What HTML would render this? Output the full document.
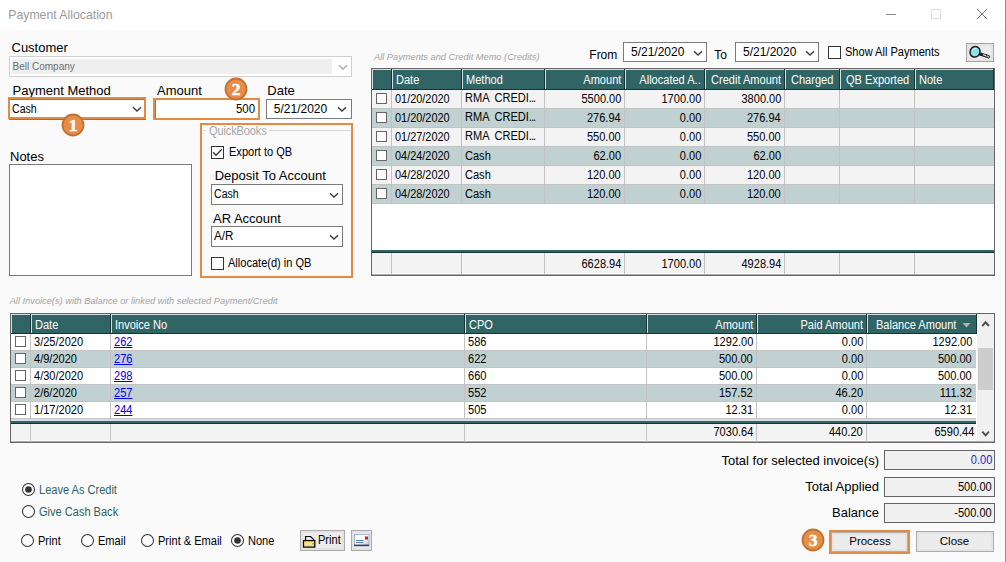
<!DOCTYPE html><html><head><meta charset="utf-8"><style>
html,body{margin:0;padding:0;width:1006px;height:562px;overflow:hidden;background:#fafafa;}
body{position:relative;font-family:"Liberation Sans",sans-serif;}
.t{position:absolute;white-space:nowrap;line-height:1;}
.b{position:absolute;box-sizing:border-box;}
u{text-decoration:underline;}
</style></head><body>
<div class="b" style="left:0px;top:0px;width:1006px;height:30px;background:#fff"></div>
<div class="t" style="left:8.3px;top:8.63px;font-size:12.25px;color:#9a9a9a;">Payment Allocation</div>
<div class="b" style="left:886px;top:14px;width:10px;height:1px;background:#8a8a8a"></div>
<div class="b" style="left:931px;top:9px;width:10px;height:10px;border:1px solid #dcdcdc"></div>
<svg class="b" style="left:976px;top:8px" width="12" height="12"><path d="M1 1 L11 11 M11 1 L1 11" stroke="#6a6a6a" stroke-width="0.95"/></svg>
<div class="b" style="left:1005px;top:0px;width:1px;height:562px;background:#8f8f8f"></div>
<div class="t" style="left:11.5px;top:41.00px;font-size:13px;color:#000;">Customer</div>
<div class="b" style="left:9px;top:56px;width:343px;height:21px;border:1px solid #d0d0d0;background:#fff"></div>
<div class="b" style="left:12px;top:59px;width:320px;height:15px;background:#efefef"></div>
<div class="t" style="left:12.5px;top:61.53px;font-size:10px;color:#6d6d6d;">Bell Company</div>
<svg class="b" style="left:338px;top:63.5px" width="10" height="6"><path d="M1 1.2 L5 5 L9 1.2" fill="none" stroke="#a8a8a8" stroke-width="1.35"/></svg>
<div class="t" style="left:12.5px;top:83.50px;font-size:13px;color:#000;">Payment Method</div>
<div class="b" style="left:9px;top:99px;width:137px;height:21px;border:1px solid #7a7a7a;background:#fff"></div>
<div class="b" style="left:8px;top:97px;width:138px;height:22px;border:2px solid #e48a43"></div>
<div class="t" style="left:11.8px;top:102.84px;font-size:12px;color:#000;transform:scaleX(0.88);transform-origin:0 0;">Cash</div>
<svg class="b" style="left:132px;top:106px" width="10" height="6"><path d="M1 1.2 L5 5 L9 1.2" fill="none" stroke="#3a3a3a" stroke-width="1.35"/></svg>
<svg class="b" style="left:60.5px;top:112.5px" width="24" height="24"><circle cx="12" cy="12" r="10.5" fill="#e68d47" stroke="#c27133" stroke-width="1.8"/><text x="12" y="18.2" text-anchor="middle" font-family="Liberation Serif" font-weight="bold" font-size="17.5" fill="#fff" stroke="#fff" stroke-width="0.5">1</text></svg>
<div class="t" style="left:157px;top:83.70px;font-size:13px;color:#000;">Amount</div>
<div class="b" style="left:153px;top:98px;width:107px;height:22px;background:#fff"></div>
<div class="b" style="left:155px;top:100px;width:1px;height:18px;background:#7a7a7a"></div>
<div class="b" style="left:153px;top:98px;width:107px;height:22px;border:2px solid #e48a43"></div>
<div class="t" style="right:750.5px;top:102.64px;font-size:12px;color:#000;transform:scaleX(0.95);transform-origin:100% 0;">500</div>
<svg class="b" style="left:223.5px;top:76.5px" width="24" height="24"><circle cx="12" cy="12" r="10.5" fill="#e68d47" stroke="#c27133" stroke-width="1.8"/><text x="12" y="18.2" text-anchor="middle" font-family="Liberation Serif" font-weight="bold" font-size="17.5" fill="#fff" stroke="#fff" stroke-width="0.5">2</text></svg>
<div class="t" style="left:267.3px;top:83.70px;font-size:13px;color:#000;">Date</div>
<div class="b" style="left:266px;top:99px;width:86px;height:20px;border:1px solid #7a7a7a;background:#fff"></div>
<div class="t" style="left:273.8px;top:102.64px;font-size:12px;color:#000;">5/21/2020</div>
<svg class="b" style="left:337px;top:106px" width="10" height="6"><path d="M1 1.2 L5 5 L9 1.2" fill="none" stroke="#3a3a3a" stroke-width="1.35"/></svg>
<div class="t" style="left:10px;top:149.80px;font-size:13px;color:#000;">Notes</div>
<div class="b" style="left:9px;top:164px;width:183px;height:112px;border:1px solid #7a7a7a;background:#fff"></div>
<div class="b" style="left:200px;top:123px;width:153px;height:155px;border:2px solid #e48a43"></div>
<div class="b" style="left:203px;top:130px;width:148px;height:1px;background:#dadada"></div>
<div class="b" style="left:206px;top:125px;width:63px;height:11px;background:#fafafa"></div>
<div class="t" style="left:209px;top:124.54px;font-size:12px;color:#a6a6a6;transform:scaleX(0.92);transform-origin:0 0;letter-spacing:-0.15px">QuickBooks</div>
<div class="b" style="left:211px;top:146px;width:13px;height:13px;border:1px solid #333;background:#fff;box-sizing:border-box"></div>
<svg class="b" style="left:211px;top:146px" width="13" height="13"><path d="M2.2 6.3 L5 9.2 L10.8 3.2" fill="none" stroke="#333" stroke-width="1.3"/></svg>
<div class="t" style="left:228.6px;top:145.84px;font-size:12px;color:#000;transform:scaleX(0.92);transform-origin:0 0;">Export to QB</div>
<div class="t" style="left:214.7px;top:169.00px;font-size:13px;color:#000;">Deposit To Account</div>
<div class="b" style="left:211px;top:184px;width:132px;height:21px;border:1px solid #7a7a7a;background:#fff"></div>
<div class="t" style="left:213.5px;top:187.84px;font-size:12px;color:#000;transform:scaleX(0.88);transform-origin:0 0;">Cash</div>
<svg class="b" style="left:329px;top:192px" width="10" height="6"><path d="M1 1.2 L5 5 L9 1.2" fill="none" stroke="#3a3a3a" stroke-width="1.35"/></svg>
<div class="t" style="left:213px;top:211.60px;font-size:13px;color:#000;">AR Account</div>
<div class="b" style="left:211px;top:226px;width:132px;height:21px;border:1px solid #7a7a7a;background:#fff"></div>
<div class="t" style="left:214px;top:229.84px;font-size:12px;color:#000;transform:scaleX(0.97);transform-origin:0 0;">A/R</div>
<svg class="b" style="left:329px;top:234px" width="10" height="6"><path d="M1 1.2 L5 5 L9 1.2" fill="none" stroke="#3a3a3a" stroke-width="1.35"/></svg>
<div class="b" style="left:211px;top:257px;width:13px;height:13px;border:1px solid #333;background:#fff;box-sizing:border-box"></div>
<div class="t" style="left:228.3px;top:256.84px;font-size:12px;color:#000;transform:scaleX(0.92);transform-origin:0 0;">Allocate(d) in QB</div>
<div class="t" style="left:374px;top:53.17px;font-size:9.25px;color:#a3a3a3;font-style:italic">All Payments and Credit Memo (Credits)</div>
<div class="t" style="left:589.3px;top:48.94px;font-size:12px;color:#000;">From</div>
<div class="b" style="left:623px;top:42px;width:84px;height:20px;border:1px solid #7a7a7a;background:#fff"></div>
<div class="t" style="left:631px;top:46.14px;font-size:12px;color:#000;">5/21/2020</div>
<svg class="b" style="left:693px;top:49.6px" width="10" height="6"><path d="M1 1.2 L5 5 L9 1.2" fill="none" stroke="#3a3a3a" stroke-width="1.35"/></svg>
<div class="t" style="left:714.2px;top:48.94px;font-size:12px;color:#000;">To</div>
<div class="b" style="left:735px;top:42px;width:84px;height:20px;border:1px solid #7a7a7a;background:#fff"></div>
<div class="t" style="left:743px;top:46.14px;font-size:12px;color:#000;">5/21/2020</div>
<svg class="b" style="left:805px;top:49.6px" width="10" height="6"><path d="M1 1.2 L5 5 L9 1.2" fill="none" stroke="#3a3a3a" stroke-width="1.35"/></svg>
<div class="b" style="left:828px;top:46px;width:13px;height:13px;border:1px solid #333;background:#fff;box-sizing:border-box"></div>
<div class="t" style="left:845.2px;top:45.84px;font-size:12px;color:#000;transform:scaleX(0.92);transform-origin:0 0;">Show All Payments</div>
<div class="b" style="left:966px;top:43px;width:28px;height:19px;border:1px solid #a5a5a5;background:#ececec;box-shadow:inset 0 0 0 2px #e4e4e4"></div>
<svg class="b" style="left:966px;top:43px" width="28" height="19"><path d="M12.5 10.5 L22.5 13.8" stroke="#1e1e1e" stroke-width="3.2" stroke-linecap="round"/><path d="M17 11.8 L22 13.5" stroke="#f4f4f4" stroke-width="1.1"/><path d="M20 11.5 L24.2 13.8 L22 15.2 Z" fill="#f8f8f8" stroke="#333" stroke-width="0.8"/><ellipse cx="9" cy="8.8" rx="4.9" ry="5.4" transform="rotate(30 9 8.8)" fill="#8fe0ee" stroke="#1e1e1e" stroke-width="1.5"/><path d="M6.5 7 Q8 5 10.5 5.5" stroke="#d8f6fb" stroke-width="1" fill="none"/></svg>
<div class="b" style="left:370px;top:67px;width:626px;height:210px;border:1px solid #fff"></div>
<div class="b" style="left:371px;top:68px;width:624px;height:208px;border:1px solid #646464;background:#fff"></div>
<div class="b" style="left:372px;top:69px;width:622px;height:1px;background:#d3e0e0"></div>
<div class="b" style="left:372px;top:70px;width:622px;height:19px;background:#316464"></div>
<div class="b" style="left:372px;top:89px;width:622px;height:1px;background:#163434"></div>
<div class="b" style="left:372px;top:70px;width:1px;height:19px;background:#d3e0e0"></div>
<div class="b" style="left:391px;top:69px;width:1px;height:21px;background:#163434"></div>
<div class="b" style="left:392px;top:70px;width:1px;height:19px;background:#d3e0e0"></div>
<div class="b" style="left:461px;top:69px;width:1px;height:21px;background:#163434"></div>
<div class="b" style="left:462px;top:70px;width:1px;height:19px;background:#d3e0e0"></div>
<div class="b" style="left:544px;top:69px;width:1px;height:21px;background:#163434"></div>
<div class="b" style="left:545px;top:70px;width:1px;height:19px;background:#d3e0e0"></div>
<div class="b" style="left:624px;top:69px;width:1px;height:21px;background:#163434"></div>
<div class="b" style="left:625px;top:70px;width:1px;height:19px;background:#d3e0e0"></div>
<div class="b" style="left:704px;top:69px;width:1px;height:21px;background:#163434"></div>
<div class="b" style="left:705px;top:70px;width:1px;height:19px;background:#d3e0e0"></div>
<div class="b" style="left:784px;top:69px;width:1px;height:21px;background:#163434"></div>
<div class="b" style="left:785px;top:70px;width:1px;height:19px;background:#d3e0e0"></div>
<div class="b" style="left:839px;top:69px;width:1px;height:21px;background:#163434"></div>
<div class="b" style="left:840px;top:70px;width:1px;height:19px;background:#d3e0e0"></div>
<div class="b" style="left:914px;top:69px;width:1px;height:21px;background:#163434"></div>
<div class="b" style="left:915px;top:70px;width:1px;height:19px;background:#d3e0e0"></div>
<div class="b" style="left:993px;top:69px;width:1px;height:21px;background:#163434"></div>
<div class="b" style="left:372px;top:90px;width:622px;height:18px;background:#f3f3f3"></div>
<div class="b" style="left:372px;top:108px;width:622px;height:1px;background:#c2c2c2"></div>
<div class="b" style="left:372px;top:109px;width:622px;height:18px;background:#c1d1d1"></div>
<div class="b" style="left:372px;top:127px;width:622px;height:1px;background:#c2c2c2"></div>
<div class="b" style="left:372px;top:128px;width:622px;height:18px;background:#f3f3f3"></div>
<div class="b" style="left:372px;top:146px;width:622px;height:1px;background:#c2c2c2"></div>
<div class="b" style="left:372px;top:147px;width:622px;height:18px;background:#c1d1d1"></div>
<div class="b" style="left:372px;top:165px;width:622px;height:1px;background:#c2c2c2"></div>
<div class="b" style="left:372px;top:166px;width:622px;height:18px;background:#f3f3f3"></div>
<div class="b" style="left:372px;top:184px;width:622px;height:1px;background:#c2c2c2"></div>
<div class="b" style="left:372px;top:185px;width:622px;height:18px;background:#c1d1d1"></div>
<div class="b" style="left:372px;top:203px;width:622px;height:1px;background:#c2c2c2"></div>
<div class="b" style="left:391px;top:90px;width:1px;height:114px;background:#c2c2c2"></div>
<div class="b" style="left:461px;top:90px;width:1px;height:114px;background:#c2c2c2"></div>
<div class="b" style="left:544px;top:90px;width:1px;height:114px;background:#c2c2c2"></div>
<div class="b" style="left:624px;top:90px;width:1px;height:114px;background:#c2c2c2"></div>
<div class="b" style="left:704px;top:90px;width:1px;height:114px;background:#c2c2c2"></div>
<div class="b" style="left:784px;top:90px;width:1px;height:114px;background:#c2c2c2"></div>
<div class="b" style="left:839px;top:90px;width:1px;height:114px;background:#c2c2c2"></div>
<div class="b" style="left:914px;top:90px;width:1px;height:114px;background:#c2c2c2"></div>
<div class="b" style="left:372px;top:250px;width:622px;height:2px;background:#316464"></div>
<div class="b" style="left:372px;top:252px;width:622px;height:1px;background:#163434"></div>
<div class="b" style="left:372px;top:253px;width:622px;height:20px;background:#f3f3f3"></div>
<div class="b" style="left:372px;top:273px;width:622px;height:1px;background:#fbfbfb"></div>
<div class="b" style="left:372px;top:274px;width:622px;height:1px;background:#b0b0b0"></div>
<div class="b" style="left:391px;top:253px;width:1px;height:21px;background:#c2c2c2"></div>
<div class="b" style="left:461px;top:253px;width:1px;height:21px;background:#c2c2c2"></div>
<div class="b" style="left:544px;top:253px;width:1px;height:21px;background:#c2c2c2"></div>
<div class="b" style="left:624px;top:253px;width:1px;height:21px;background:#c2c2c2"></div>
<div class="b" style="left:704px;top:253px;width:1px;height:21px;background:#c2c2c2"></div>
<div class="b" style="left:784px;top:253px;width:1px;height:21px;background:#c2c2c2"></div>
<div class="b" style="left:839px;top:253px;width:1px;height:21px;background:#c2c2c2"></div>
<div class="b" style="left:914px;top:253px;width:1px;height:21px;background:#c2c2c2"></div>
<div class="t" style="left:396px;top:73.84px;font-size:12px;color:#fff;transform:scaleX(0.92);transform-origin:0 0;">Date</div>
<div class="t" style="left:466px;top:73.84px;font-size:12px;color:#fff;transform:scaleX(0.92);transform-origin:0 0;">Method</div>
<div class="t" style="right:385px;top:73.84px;font-size:12px;color:#fff;transform:scaleX(0.92);transform-origin:100% 0;">Amount</div>
<div class="t" style="right:305px;top:73.84px;font-size:12px;color:#fff;transform:scaleX(0.92);transform-origin:100% 0;">Allocated A..</div>
<div class="t" style="right:225px;top:73.84px;font-size:12px;color:#fff;transform:scaleX(0.92);transform-origin:100% 0;">Credit Amount</div>
<div class="t" style="left:791px;top:73.84px;font-size:12px;color:#fff;transform:scaleX(0.92);transform-origin:0 0;">Charged</div>
<div class="t" style="left:846px;top:73.84px;font-size:12px;color:#fff;transform:scaleX(0.92);transform-origin:0 0;">QB Exported</div>
<div class="t" style="left:919px;top:73.84px;font-size:12px;color:#fff;transform:scaleX(0.92);transform-origin:0 0;">Note</div>
<div class="b" style="left:376px;top:93px;width:11px;height:11px;border:1px solid #666;background:#fff"></div>
<div class="t" style="left:395px;top:92.84px;font-size:12px;color:#000;transform:scaleX(0.91);transform-origin:0 0;">01/20/2020</div>
<div class="t" style="left:465.2px;top:91.84px;font-size:12px;color:#000;transform:scaleX(0.92);transform-origin:0 0;">RMA<span style="margin-left:2px"> </span>CREDI<span style="letter-spacing:-1px">...</span></div>
<div class="t" style="right:385px;top:92.84px;font-size:12px;color:#000;transform:scaleX(0.92);transform-origin:100% 0;">5500.00</div>
<div class="t" style="right:305px;top:92.84px;font-size:12px;color:#000;transform:scaleX(0.92);transform-origin:100% 0;">1700.00</div>
<div class="t" style="right:225px;top:92.84px;font-size:12px;color:#000;transform:scaleX(0.92);transform-origin:100% 0;">3800.00</div>
<div class="b" style="left:376px;top:112px;width:11px;height:11px;border:1px solid #666;background:#fff"></div>
<div class="t" style="left:395px;top:111.84px;font-size:12px;color:#000;transform:scaleX(0.91);transform-origin:0 0;">01/20/2020</div>
<div class="t" style="left:465.2px;top:110.84px;font-size:12px;color:#000;transform:scaleX(0.92);transform-origin:0 0;">RMA<span style="margin-left:2px"> </span>CREDI<span style="letter-spacing:-1px">...</span></div>
<div class="t" style="right:385px;top:111.84px;font-size:12px;color:#000;transform:scaleX(0.92);transform-origin:100% 0;">276.94</div>
<div class="t" style="right:305px;top:111.84px;font-size:12px;color:#000;transform:scaleX(0.92);transform-origin:100% 0;">0.00</div>
<div class="t" style="right:225px;top:111.84px;font-size:12px;color:#000;transform:scaleX(0.92);transform-origin:100% 0;">276.94</div>
<div class="b" style="left:376px;top:131px;width:11px;height:11px;border:1px solid #666;background:#fff"></div>
<div class="t" style="left:395px;top:130.84px;font-size:12px;color:#000;transform:scaleX(0.91);transform-origin:0 0;">01/27/2020</div>
<div class="t" style="left:465.2px;top:129.84px;font-size:12px;color:#000;transform:scaleX(0.92);transform-origin:0 0;">RMA<span style="margin-left:2px"> </span>CREDI<span style="letter-spacing:-1px">...</span></div>
<div class="t" style="right:385px;top:130.84px;font-size:12px;color:#000;transform:scaleX(0.92);transform-origin:100% 0;">550.00</div>
<div class="t" style="right:305px;top:130.84px;font-size:12px;color:#000;transform:scaleX(0.92);transform-origin:100% 0;">0.00</div>
<div class="t" style="right:225px;top:130.84px;font-size:12px;color:#000;transform:scaleX(0.92);transform-origin:100% 0;">550.00</div>
<div class="b" style="left:376px;top:150px;width:11px;height:11px;border:1px solid #666;background:#fff"></div>
<div class="t" style="left:395px;top:149.84px;font-size:12px;color:#000;transform:scaleX(0.91);transform-origin:0 0;">04/24/2020</div>
<div class="t" style="left:464.8px;top:149.84px;font-size:12px;color:#000;transform:scaleX(0.92);transform-origin:0 0;">Cash</div>
<div class="t" style="right:385px;top:149.84px;font-size:12px;color:#000;transform:scaleX(0.92);transform-origin:100% 0;">62.00</div>
<div class="t" style="right:305px;top:149.84px;font-size:12px;color:#000;transform:scaleX(0.92);transform-origin:100% 0;">0.00</div>
<div class="t" style="right:225px;top:149.84px;font-size:12px;color:#000;transform:scaleX(0.92);transform-origin:100% 0;">62.00</div>
<div class="b" style="left:376px;top:169px;width:11px;height:11px;border:1px solid #666;background:#fff"></div>
<div class="t" style="left:395px;top:168.84px;font-size:12px;color:#000;transform:scaleX(0.91);transform-origin:0 0;">04/28/2020</div>
<div class="t" style="left:464.8px;top:168.84px;font-size:12px;color:#000;transform:scaleX(0.92);transform-origin:0 0;">Cash</div>
<div class="t" style="right:385px;top:168.84px;font-size:12px;color:#000;transform:scaleX(0.92);transform-origin:100% 0;">120.00</div>
<div class="t" style="right:305px;top:168.84px;font-size:12px;color:#000;transform:scaleX(0.92);transform-origin:100% 0;">0.00</div>
<div class="t" style="right:225px;top:168.84px;font-size:12px;color:#000;transform:scaleX(0.92);transform-origin:100% 0;">120.00</div>
<div class="b" style="left:376px;top:188px;width:11px;height:11px;border:1px solid #666;background:#fff"></div>
<div class="t" style="left:395px;top:187.84px;font-size:12px;color:#000;transform:scaleX(0.91);transform-origin:0 0;">04/28/2020</div>
<div class="t" style="left:464.8px;top:187.84px;font-size:12px;color:#000;transform:scaleX(0.92);transform-origin:0 0;">Cash</div>
<div class="t" style="right:385px;top:187.84px;font-size:12px;color:#000;transform:scaleX(0.92);transform-origin:100% 0;">120.00</div>
<div class="t" style="right:305px;top:187.84px;font-size:12px;color:#000;transform:scaleX(0.92);transform-origin:100% 0;">0.00</div>
<div class="t" style="right:225px;top:187.84px;font-size:12px;color:#000;transform:scaleX(0.92);transform-origin:100% 0;">120.00</div>
<div class="t" style="right:385px;top:257.84px;font-size:12px;color:#000;transform:scaleX(0.92);transform-origin:100% 0;">6628.94</div>
<div class="t" style="right:305px;top:257.84px;font-size:12px;color:#000;transform:scaleX(0.92);transform-origin:100% 0;">1700.00</div>
<div class="t" style="right:225px;top:257.84px;font-size:12px;color:#000;transform:scaleX(0.92);transform-origin:100% 0;">4928.94</div>
<div class="t" style="left:9.7px;top:297.17px;font-size:9.25px;color:#a3a3a3;font-style:italic">All Invoice(s) with Balance or linked with selected Payment/Credit</div>
<div class="b" style="left:9px;top:312px;width:987px;height:132px;border:1px solid #fff"></div>
<div class="b" style="left:10px;top:313px;width:985px;height:130px;border:1px solid #646464;background:#fff"></div>
<div class="b" style="left:11px;top:314px;width:966px;height:1px;background:#d3e0e0"></div>
<div class="b" style="left:11px;top:315px;width:966px;height:18px;background:#316464"></div>
<div class="b" style="left:11px;top:333px;width:966px;height:1px;background:#163434"></div>
<div class="b" style="left:11px;top:315px;width:1px;height:18px;background:#d3e0e0"></div>
<div class="b" style="left:30px;top:314px;width:1px;height:20px;background:#163434"></div>
<div class="b" style="left:31px;top:315px;width:1px;height:18px;background:#d3e0e0"></div>
<div class="b" style="left:110px;top:314px;width:1px;height:20px;background:#163434"></div>
<div class="b" style="left:111px;top:315px;width:1px;height:18px;background:#d3e0e0"></div>
<div class="b" style="left:464px;top:314px;width:1px;height:20px;background:#163434"></div>
<div class="b" style="left:465px;top:315px;width:1px;height:18px;background:#d3e0e0"></div>
<div class="b" style="left:646px;top:314px;width:1px;height:20px;background:#163434"></div>
<div class="b" style="left:647px;top:315px;width:1px;height:18px;background:#d3e0e0"></div>
<div class="b" style="left:756px;top:314px;width:1px;height:20px;background:#163434"></div>
<div class="b" style="left:757px;top:315px;width:1px;height:18px;background:#d3e0e0"></div>
<div class="b" style="left:866px;top:314px;width:1px;height:20px;background:#163434"></div>
<div class="b" style="left:867px;top:315px;width:1px;height:18px;background:#d3e0e0"></div>
<div class="b" style="left:976px;top:314px;width:1px;height:20px;background:#163434"></div>
<div class="b" style="left:11px;top:334px;width:965px;height:16px;background:#fff"></div>
<div class="b" style="left:11px;top:350px;width:965px;height:1px;background:#c2c2c2"></div>
<div class="b" style="left:11px;top:351px;width:965px;height:16px;background:#c1d1d1"></div>
<div class="b" style="left:11px;top:367px;width:965px;height:1px;background:#c2c2c2"></div>
<div class="b" style="left:11px;top:368px;width:965px;height:16px;background:#fff"></div>
<div class="b" style="left:11px;top:384px;width:965px;height:1px;background:#c2c2c2"></div>
<div class="b" style="left:11px;top:385px;width:965px;height:16px;background:#c1d1d1"></div>
<div class="b" style="left:11px;top:401px;width:965px;height:1px;background:#c2c2c2"></div>
<div class="b" style="left:11px;top:402px;width:965px;height:16px;background:#fff"></div>
<div class="b" style="left:11px;top:418px;width:965px;height:1px;background:#c2c2c2"></div>
<div class="b" style="left:30px;top:334px;width:1px;height:85px;background:#c2c2c2"></div>
<div class="b" style="left:110px;top:334px;width:1px;height:85px;background:#c2c2c2"></div>
<div class="b" style="left:464px;top:334px;width:1px;height:85px;background:#c2c2c2"></div>
<div class="b" style="left:646px;top:334px;width:1px;height:85px;background:#c2c2c2"></div>
<div class="b" style="left:756px;top:334px;width:1px;height:85px;background:#c2c2c2"></div>
<div class="b" style="left:866px;top:334px;width:1px;height:85px;background:#c2c2c2"></div>
<div class="b" style="left:11px;top:419px;width:965px;height:2px;background:#d6dede"></div>
<div class="b" style="left:11px;top:421px;width:965px;height:2px;background:#316464"></div>
<div class="b" style="left:11px;top:423px;width:965px;height:1px;background:#163434"></div>
<div class="b" style="left:11px;top:424px;width:965px;height:16px;background:#f3f3f3"></div>
<div class="b" style="left:11px;top:440px;width:983px;height:1px;background:#fbfbfb"></div>
<div class="b" style="left:11px;top:441px;width:983px;height:1px;background:#b0b0b0"></div>
<div class="b" style="left:30px;top:424px;width:1px;height:18px;background:#c2c2c2"></div>
<div class="b" style="left:110px;top:424px;width:1px;height:18px;background:#c2c2c2"></div>
<div class="b" style="left:464px;top:424px;width:1px;height:18px;background:#c2c2c2"></div>
<div class="b" style="left:646px;top:424px;width:1px;height:18px;background:#c2c2c2"></div>
<div class="b" style="left:756px;top:424px;width:1px;height:18px;background:#c2c2c2"></div>
<div class="b" style="left:866px;top:424px;width:1px;height:18px;background:#c2c2c2"></div>
<div class="t" style="left:35.3px;top:318.84px;font-size:12px;color:#fff;transform:scaleX(0.92);transform-origin:0 0;">Date</div>
<div class="t" style="left:115.3px;top:318.84px;font-size:12px;color:#fff;transform:scaleX(0.92);transform-origin:0 0;">Invoice No</div>
<div class="t" style="left:468.7px;top:318.84px;font-size:12px;color:#fff;transform:scaleX(0.92);transform-origin:0 0;">CPO</div>
<div class="t" style="right:253px;top:318.84px;font-size:12px;color:#fff;transform:scaleX(0.92);transform-origin:100% 0;">Amount</div>
<div class="t" style="right:143px;top:318.84px;font-size:12px;color:#fff;transform:scaleX(0.92);transform-origin:100% 0;">Paid Amount</div>
<div class="t" style="left:876.2px;top:318.84px;font-size:12px;color:#fff;transform:scaleX(0.92);transform-origin:0 0;">Balance Amount</div>
<svg class="b" style="left:962px;top:323px" width="9" height="5"><path d="M0.5 0 L8.5 0 L4.5 4.5 Z" fill="#a3b9b9"/></svg>
<div class="b" style="left:15px;top:336px;width:11px;height:11px;border:1px solid #666;background:#fff"></div>
<div class="t" style="left:34px;top:335.84px;font-size:12px;color:#000;transform:scaleX(0.92);transform-origin:0 0;">3/25/2020</div>
<div class="t" style="left:114px;top:335.84px;font-size:12px;color:#0000ee;transform:scaleX(0.92);transform-origin:0 0;"><u>262</u></div>
<div class="t" style="left:467.5px;top:335.84px;font-size:12px;color:#000;transform:scaleX(0.92);transform-origin:0 0;">586</div>
<div class="t" style="right:253px;top:335.84px;font-size:12px;color:#000;transform:scaleX(0.92);transform-origin:100% 0;">1292.00</div>
<div class="t" style="right:143px;top:335.84px;font-size:12px;color:#000;transform:scaleX(0.92);transform-origin:100% 0;">0.00</div>
<div class="t" style="right:34px;top:335.84px;font-size:12px;color:#000;transform:scaleX(0.92);transform-origin:100% 0;">1292.00</div>
<div class="b" style="left:15px;top:353px;width:11px;height:11px;border:1px solid #666;background:#fff"></div>
<div class="t" style="left:34px;top:352.84px;font-size:12px;color:#000;transform:scaleX(0.92);transform-origin:0 0;">4/9/2020</div>
<div class="t" style="left:114px;top:352.84px;font-size:12px;color:#0000ee;transform:scaleX(0.92);transform-origin:0 0;"><u>276</u></div>
<div class="t" style="left:467.5px;top:352.84px;font-size:12px;color:#000;transform:scaleX(0.92);transform-origin:0 0;">622</div>
<div class="t" style="right:253px;top:352.84px;font-size:12px;color:#000;transform:scaleX(0.92);transform-origin:100% 0;">500.00</div>
<div class="t" style="right:143px;top:352.84px;font-size:12px;color:#000;transform:scaleX(0.92);transform-origin:100% 0;">0.00</div>
<div class="t" style="right:34px;top:352.84px;font-size:12px;color:#000;transform:scaleX(0.92);transform-origin:100% 0;">500.00</div>
<div class="b" style="left:15px;top:370px;width:11px;height:11px;border:1px solid #666;background:#fff"></div>
<div class="t" style="left:34px;top:369.84px;font-size:12px;color:#000;transform:scaleX(0.92);transform-origin:0 0;">4/30/2020</div>
<div class="t" style="left:114px;top:369.84px;font-size:12px;color:#0000ee;transform:scaleX(0.92);transform-origin:0 0;"><u>298</u></div>
<div class="t" style="left:467.5px;top:369.84px;font-size:12px;color:#000;transform:scaleX(0.92);transform-origin:0 0;">660</div>
<div class="t" style="right:253px;top:369.84px;font-size:12px;color:#000;transform:scaleX(0.92);transform-origin:100% 0;">500.00</div>
<div class="t" style="right:143px;top:369.84px;font-size:12px;color:#000;transform:scaleX(0.92);transform-origin:100% 0;">0.00</div>
<div class="t" style="right:34px;top:369.84px;font-size:12px;color:#000;transform:scaleX(0.92);transform-origin:100% 0;">500.00</div>
<div class="b" style="left:15px;top:387px;width:11px;height:11px;border:1px solid #666;background:#fff"></div>
<div class="t" style="left:34px;top:386.84px;font-size:12px;color:#000;transform:scaleX(0.92);transform-origin:0 0;">2/6/2020</div>
<div class="t" style="left:114px;top:386.84px;font-size:12px;color:#0000ee;transform:scaleX(0.92);transform-origin:0 0;"><u>257</u></div>
<div class="t" style="left:467.5px;top:386.84px;font-size:12px;color:#000;transform:scaleX(0.92);transform-origin:0 0;">552</div>
<div class="t" style="right:253px;top:386.84px;font-size:12px;color:#000;transform:scaleX(0.92);transform-origin:100% 0;">157.52</div>
<div class="t" style="right:143px;top:386.84px;font-size:12px;color:#000;transform:scaleX(0.92);transform-origin:100% 0;">46.20</div>
<div class="t" style="right:34px;top:386.84px;font-size:12px;color:#000;transform:scaleX(0.92);transform-origin:100% 0;">111.32</div>
<div class="b" style="left:15px;top:404px;width:11px;height:11px;border:1px solid #666;background:#fff"></div>
<div class="t" style="left:34px;top:403.84px;font-size:12px;color:#000;transform:scaleX(0.92);transform-origin:0 0;">1/17/2020</div>
<div class="t" style="left:114px;top:403.84px;font-size:12px;color:#0000ee;transform:scaleX(0.92);transform-origin:0 0;"><u>244</u></div>
<div class="t" style="left:467.5px;top:403.84px;font-size:12px;color:#000;transform:scaleX(0.92);transform-origin:0 0;">505</div>
<div class="t" style="right:253px;top:403.84px;font-size:12px;color:#000;transform:scaleX(0.92);transform-origin:100% 0;">12.31</div>
<div class="t" style="right:143px;top:403.84px;font-size:12px;color:#000;transform:scaleX(0.92);transform-origin:100% 0;">0.00</div>
<div class="t" style="right:34px;top:403.84px;font-size:12px;color:#000;transform:scaleX(0.92);transform-origin:100% 0;">12.31</div>
<div class="t" style="right:253px;top:426.34px;font-size:12px;color:#000;transform:scaleX(0.92);transform-origin:100% 0;">7030.64</div>
<div class="t" style="right:143px;top:426.34px;font-size:12px;color:#000;transform:scaleX(0.92);transform-origin:100% 0;">440.20</div>
<div class="t" style="right:32px;top:426.34px;font-size:12px;color:#000;transform:scaleX(0.92);transform-origin:100% 0;">6590.44</div>
<div class="b" style="left:977px;top:314px;width:17px;height:127px;background:#f0f0f0"></div>
<div class="b" style="left:978px;top:348px;width:15px;height:42px;background:#cdcdcd"></div>
<svg class="b" style="left:980px;top:319px" width="12" height="9"><path d="M2.3 7 L5.6 3.3 L8.9 7" fill="none" stroke="#4d4d4d" stroke-width="1.9"/></svg>
<svg class="b" style="left:980px;top:429px" width="12" height="9"><path d="M2.3 2.6 L5.6 6.3 L8.9 2.6" fill="none" stroke="#4d4d4d" stroke-width="1.9"/></svg>
<svg class="b" style="left:21px;top:482px" width="16" height="16"><circle cx="7.5" cy="7.5" r="6" fill="#fff" stroke="#333" stroke-width="1.05"/><circle cx="7.5" cy="7.5" r="3.3" fill="#333"/></svg>
<div class="t" style="left:38.8px;top:483.64px;font-size:12px;color:#2e6262;transform:scaleX(0.92);transform-origin:0 0;">Leave As Credit</div>
<svg class="b" style="left:21px;top:504px" width="16" height="16"><circle cx="7.5" cy="7.5" r="6" fill="#fff" stroke="#333" stroke-width="1.05"/></svg>
<div class="t" style="left:38.8px;top:505.84px;font-size:12px;color:#2e6262;transform:scaleX(0.92);transform-origin:0 0;">Give Cash Back</div>
<svg class="b" style="left:20px;top:533px" width="16" height="16"><circle cx="7.5" cy="7.5" r="6" fill="#fff" stroke="#333" stroke-width="1.05"/></svg>
<div class="t" style="left:37.9px;top:535.34px;font-size:12px;color:#000;transform:scaleX(0.92);transform-origin:0 0;">Print</div>
<svg class="b" style="left:80px;top:533px" width="16" height="16"><circle cx="7.5" cy="7.5" r="6" fill="#fff" stroke="#333" stroke-width="1.05"/></svg>
<div class="t" style="left:97.9px;top:535.34px;font-size:12px;color:#000;transform:scaleX(0.92);transform-origin:0 0;">Email</div>
<svg class="b" style="left:140px;top:533px" width="16" height="16"><circle cx="7.5" cy="7.5" r="6" fill="#fff" stroke="#333" stroke-width="1.05"/></svg>
<div class="t" style="left:157.8px;top:535.34px;font-size:12px;color:#000;transform:scaleX(0.92);transform-origin:0 0;">Print &amp; Email</div>
<svg class="b" style="left:230px;top:533px" width="16" height="16"><circle cx="7.5" cy="7.5" r="6" fill="#fff" stroke="#333" stroke-width="1.05"/><circle cx="7.5" cy="7.5" r="3.3" fill="#333"/></svg>
<div class="t" style="left:247.9px;top:535.34px;font-size:12px;color:#000;transform:scaleX(0.92);transform-origin:0 0;">None</div>
<div class="b" style="left:300px;top:530px;width:45px;height:21px;border:1px solid #a9a9a9;background:#ececec;box-shadow:inset 0 0 0 2px #e3e3e3"></div>
<svg class="b" style="left:302px;top:534px" width="15" height="16"><path d="M3.6 6.6 L3.6 2.5 L8.6 2.5 L12 6 L12 6.6" fill="#e8e8fa" stroke="#000" stroke-width="1.15"/><rect x="1.5" y="6.6" width="11.3" height="6.5" fill="#ffe36a" stroke="#000" stroke-width="1.25"/><rect x="3" y="9" width="7.5" height="1.6" fill="#dcdcf2"/><rect x="10.3" y="9" width="1.5" height="1.5" fill="#3ad13a"/></svg>
<div class="t" style="left:317.7px;top:533.84px;font-size:12px;color:#000;transform:scaleX(0.92);transform-origin:0 0;">Print</div>
<div class="b" style="left:351px;top:530px;width:21px;height:21px;border:1px solid #a9a9a9;background:#ececec;box-shadow:inset 0 0 0 2px #e3e3e3"></div>
<svg class="b" style="left:354px;top:533px" width="16" height="14"><defs><linearGradient id="eg" x1="0" y1="0" x2="1" y2="1"><stop offset="0.5" stop-color="#fff"/><stop offset="1" stop-color="#c4c4c4"/></linearGradient></defs><rect x="0.5" y="1.5" width="14.5" height="11" fill="url(#eg)" stroke="#a3b6d8" stroke-width="1"/><rect x="11" y="3.5" width="3" height="3" fill="#ee1111"/><path d="M2 7.5 L9.5 7.5 M2 9.6 L9.5 9.6" stroke="#5577aa" stroke-width="1"/><rect x="0" y="11.6" width="15" height="1.6" fill="#2a4470"/></svg>
<div class="t" style="right:127px;top:454.00px;font-size:13px;color:#000;">Total for selected invoice(s)</div>
<div class="b" style="left:884px;top:450px;width:111px;height:20px;border:1px solid #646464;background:#f0f0f0"></div>
<div class="t" style="right:14px;top:453.84px;font-size:12px;color:#2020e0;transform:scaleX(0.92);transform-origin:100% 0;">0.00</div>
<div class="t" style="right:127px;top:480.00px;font-size:13px;color:#000;">Total Applied</div>
<div class="b" style="left:884px;top:477px;width:111px;height:20px;border:1px solid #646464;background:#f0f0f0"></div>
<div class="t" style="right:14px;top:480.84px;font-size:12px;color:#000;transform:scaleX(0.92);transform-origin:100% 0;">500.00</div>
<div class="t" style="right:127px;top:506.00px;font-size:13px;color:#000;">Balance</div>
<div class="b" style="left:884px;top:503px;width:111px;height:20px;border:1px solid #646464;background:#f0f0f0"></div>
<div class="t" style="right:14px;top:506.84px;font-size:12px;color:#000;transform:scaleX(0.92);transform-origin:100% 0;">-500.00</div>
<svg class="b" style="left:800.5px;top:527.8px" width="24" height="24"><circle cx="12" cy="12" r="10.5" fill="#e68d47" stroke="#c27133" stroke-width="1.8"/><text x="12" y="18.2" text-anchor="middle" font-family="Liberation Serif" font-weight="bold" font-size="17.5" fill="#fff" stroke="#fff" stroke-width="0.5">3</text></svg>
<div class="b" style="left:831px;top:532px;width:77px;height:20px;border:1px solid #adadad;background:#ececec;box-shadow:inset 0 0 0 2px #e4e4e4"></div>
<div class="b" style="left:829px;top:530px;width:81px;height:24px;border:2px solid #e48a43"></div>
<div class="t" style="left:870px;top:535.77px;font-size:11.5px;color:#000;transform:translateX(-50%)">Process</div>
<div class="b" style="left:916px;top:531px;width:78px;height:21px;border:1px solid #adadad;background:#ececec;box-shadow:inset 0 0 0 2px #e4e4e4"></div>
<div class="t" style="left:954.5px;top:535.77px;font-size:11.5px;color:#000;transform:translateX(-50%)">Close</div>
</body></html>
